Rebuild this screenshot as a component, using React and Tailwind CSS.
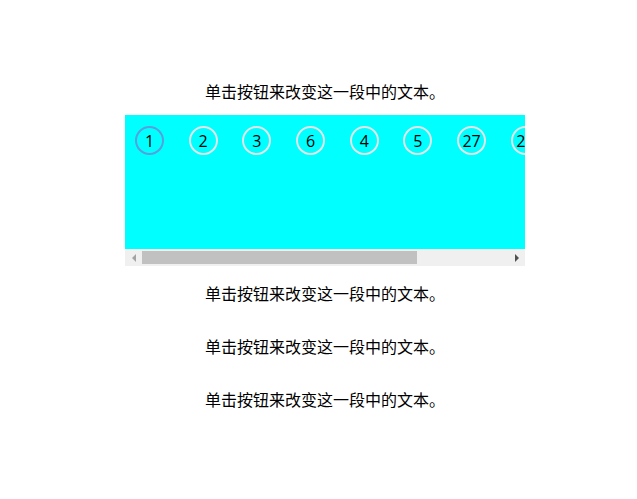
const items = ['1', '2', '3', '6', '4', '5', '27', '28'];

const Paragraph = ({ className = '' }) => (
  <p className={`text-center text-[16px] leading-[24px] text-black ${className}`}>
    单击按钮来改变这一段中的文本。
  </p>
);

export default function App() {
  return (
    <div
      className="min-h-[499px] bg-white pt-[79px]"
      style={{ fontFamily: '"Noto Sans CJK SC", "Noto Sans", sans-serif' }}
    >
      <div className="ml-[125px] w-[400px]">
        <Paragraph />

        {/* 可滚动的按钮区域 */}
        <div className="mt-[12px] flex h-[151px] flex-col">
          <div className="flex-1 overflow-hidden bg-[#00ffff]">
            <div className="flex gap-[24.7px] pl-[10px] pt-[11px]">
              {items.map((item, i) => (
                <div
                  key={item}
                  className={`flex h-[29px] w-[29px] shrink-0 items-center justify-center rounded-full border-2 text-[16px] text-black ${
                    i === 0 ? 'border-[#56a0dc]' : 'border-[#e3e3e3]'
                  }`}
                  style={{ fontFamily: '"Open Sans", "Noto Sans", sans-serif' }}
                >
                  {item}
                </div>
              ))}
            </div>
          </div>

          {/* 滚动条 */}
          <div className="flex h-[17px] bg-[#f0f0f0]">
            <div className="flex w-[17px] items-center justify-center">
              <div className="h-0 w-0 border-y-[4px] border-r-[4px] border-y-transparent border-r-[#a3a3a3]" />
            </div>
            <div className="flex flex-1 items-center">
              <div className="h-[13px] w-[275px] bg-[#c1c1c1]" />
            </div>
            <div className="flex w-[17px] items-center justify-center">
              <div className="h-0 w-0 border-y-[4px] border-l-[4px] border-y-transparent border-l-[#505050]" />
            </div>
          </div>
        </div>

        <Paragraph className="mt-[15px]" />
        <Paragraph className="mt-[29px]" />
        <Paragraph className="mt-[29px]" />
      </div>
    </div>
  );
}
